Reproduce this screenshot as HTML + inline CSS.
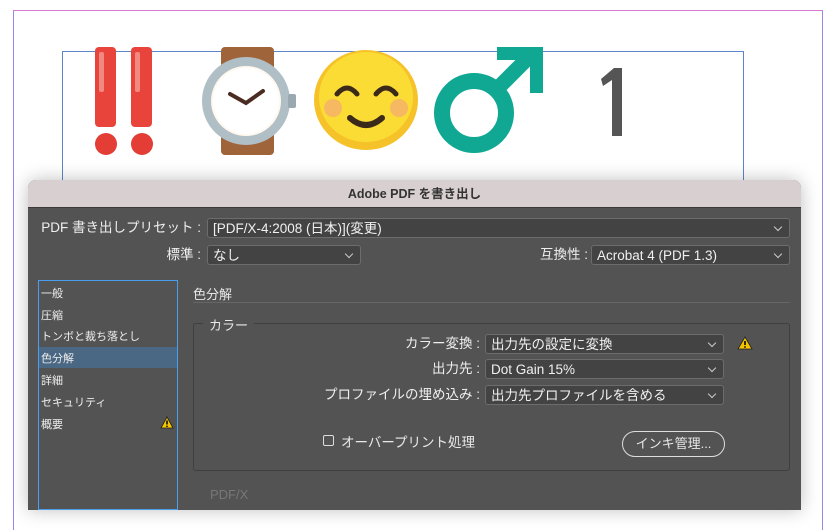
<!DOCTYPE html>
<html><head><meta charset="utf-8"><style>
*{box-sizing:border-box;margin:0;padding:0}
body{width:838px;height:499px;overflow:hidden;background:#fff;position:relative;font-family:"Liberation Sans","Noto Sans CJK JP",sans-serif;font-size:13px;color:#e8e8e8}
.abs{position:absolute}
.frame{left:13px;top:10px;width:810px;height:520px;border-top:1px solid #d77ad2;border-left:1px solid #9a86f0;border-right:1px solid #9a86f0}
.blue{left:62px;top:51px;width:682px;height:140px;border:1px solid #5a86c8}
.dlg{left:28px;top:180px;width:773px;height:330px;background:#535353;border-radius:8px 8px 0 0;box-shadow:0 0 18px rgba(0,0,0,.25);overflow:hidden}
.title{left:0;top:0;width:773px;height:28px;background:#d8cfd1;border-bottom:1px solid #3a3a3a;color:#333;font-weight:bold;font-size:12.5px;text-align:center;line-height:28px}
.sel{background:#434343;border:1px solid #6c6c6c;border-radius:3px;height:20px;line-height:20px;padding-left:5px;color:#f0f0f0;font-size:13.5px}
.sel:after{content:"";position:absolute;right:8px;top:5px;width:5px;height:5px;border-right:1px solid #ccc;border-bottom:1px solid #ccc;transform:rotate(45deg)}
.lbl{text-align:right;font-size:13.5px;color:#eee;line-height:20px}
.side{left:10px;top:100px;width:140px;height:230px;border:1px solid #4a9ef0}
.it{position:absolute;left:2px;font-size:11px;color:#eee}
</style></head><body>
<div class="abs frame"></div>
<div class="abs blue"></div>
<svg class="abs" style="left:0;top:0" width="838" height="180">
<rect x="95" y="47" width="21" height="80" rx="4" fill="#e8443c"/><rect x="99" y="52" width="5" height="40" rx="2" fill="#f08a80"/>
<rect x="131" y="47" width="21" height="80" rx="4" fill="#e8443c"/><rect x="135" y="52" width="5" height="40" rx="2" fill="#f08a80"/>
<circle cx="106" cy="144" r="11" fill="#e33d36"/><circle cx="142" cy="144" r="11" fill="#e33d36"/>
<rect x="221" y="47" width="53" height="108" rx="4" fill="#a0643a"/>
<circle cx="246" cy="101" r="44" fill="#b0bec5"/><rect x="288" y="94" width="8" height="14" rx="2" fill="#9aa8b0"/>
<circle cx="246" cy="101" r="35" fill="#fff8ee"/><circle cx="246" cy="101" r="33" fill="#fff"/>
<path d="M230 94 L246 103 L263 91" stroke="#4a2c22" stroke-width="4" fill="none" stroke-linecap="round"/>
<ellipse cx="366" cy="100" rx="52" ry="50" fill="#f6c22a"/><ellipse cx="366" cy="97" rx="47" ry="45" fill="#fbdc34"/>
<circle cx="333" cy="108" r="9" fill="#f3a080" opacity=".6"/><circle cx="399" cy="108" r="9" fill="#f3a080" opacity=".6"/>
<path d="M337 94 q10 -12 20 0 M376 94 q10 -12 20 0" stroke="#3b2a1a" stroke-width="5" fill="none" stroke-linecap="round"/>
<path d="M350 118 q16 14 32 0" stroke="#3b2a1a" stroke-width="6" fill="none" stroke-linecap="round"/>
<circle cx="474" cy="113" r="32" stroke="#10a893" stroke-width="16" fill="none"/>
<path d="M494 92 L530 56" stroke="#10a893" stroke-width="15"/>
<path d="M497 47 H543 V93 H530 V60 H497 Z" fill="#10a893"/>
<path d="M601 79 L614 68 H622 V136 H612 V80 L603 86 Z" fill="#555"/>
</svg>
<div class="abs dlg">
<div class="abs title">Adobe PDF を書き出し</div>
<div class="abs lbl" style="left:0;top:38px;width:173px">PDF 書き出しプリセット :</div>
<div class="abs sel" style="left:179px;top:38px;width:583px">[PDF/X-4:2008 (日本)](変更)</div>
<div class="abs lbl" style="left:0;top:65px;width:173px">標準 :</div>
<div class="abs sel" style="left:179px;top:65px;width:154px">なし</div>
<div class="abs lbl" style="left:400px;top:65px;width:160px">互換性 :</div>
<div class="abs sel" style="left:563px;top:65px;width:199px">Acrobat 4 (PDF 1.3)</div>
<div class="abs side">
<div class="it" style="top:4px">一般</div>
<div class="it" style="top:26px">圧縮</div>
<div class="it" style="top:47px">トンボと裁ち落とし</div>
<div class="abs" style="left:0;top:66px;width:138px;height:21px;background:#4a6783"></div>
<div class="it" style="top:69px">色分解</div>
<div class="it" style="top:91px">詳細</div>
<div class="it" style="top:113px">セキュリティ</div>
<div class="it" style="top:135px">概要</div>
<svg class="abs" style="left:121px;top:135px" width="14" height="13"><path d="M7 1 L13 12 H1 Z" fill="#f5c400" stroke="#222" stroke-width=".8"/><path d="M7 4.5 V8.5" stroke="#000" stroke-width="1.5"/><circle cx="7" cy="10.3" r=".8"/></svg>
</div>
<div class="abs" style="left:165px;top:104px;font-size:13px">色分解</div>
<div class="abs" style="left:165px;top:122px;width:597px;border-top:1px solid #666"></div>
<div class="abs" style="left:165px;top:143px;width:597px;height:148px;border:1px solid #3f3f3f;border-radius:3px"></div>
<div class="abs" style="left:175px;top:135px;padding:0 6px;background:#535353;font-size:13px">カラー</div>
<div class="abs lbl" style="left:250px;top:154px;width:202px">カラー変換 :</div>
<div class="abs sel" style="left:457px;top:154px;width:239px">出力先の設定に変換</div>
<svg class="abs" style="left:709px;top:156px" width="16" height="14"><path d="M8 1 L15 13 H1 Z" fill="#f5c400" stroke="#222" stroke-width=".8"/><path d="M8 5 V9" stroke="#000" stroke-width="1.6"/><circle cx="8" cy="11" r=".9"/></svg>
<div class="abs lbl" style="left:250px;top:179px;width:202px">出力先 :</div>
<div class="abs sel" style="left:457px;top:179px;width:239px">Dot Gain 15%</div>
<div class="abs lbl" style="left:250px;top:205px;width:202px">プロファイルの埋め込み :</div>
<div class="abs sel" style="left:457px;top:205px;width:239px">出力先プロファイルを含める</div>
<div class="abs" style="left:295px;top:255px;width:11px;height:11px;border:1px solid #ddd;border-radius:2px"></div>
<div class="abs" style="left:313px;top:251px;font-size:13.5px">オーバープリント処理</div>
<div class="abs" style="left:594px;top:251px;width:103px;height:26px;border:1px solid #ddd;border-radius:13px;text-align:center;line-height:24px;font-size:13px">インキ管理...</div>
<div class="abs" style="left:182px;top:307px;color:#777;font-size:13px">PDF/X</div>
</div>
</body></html>
